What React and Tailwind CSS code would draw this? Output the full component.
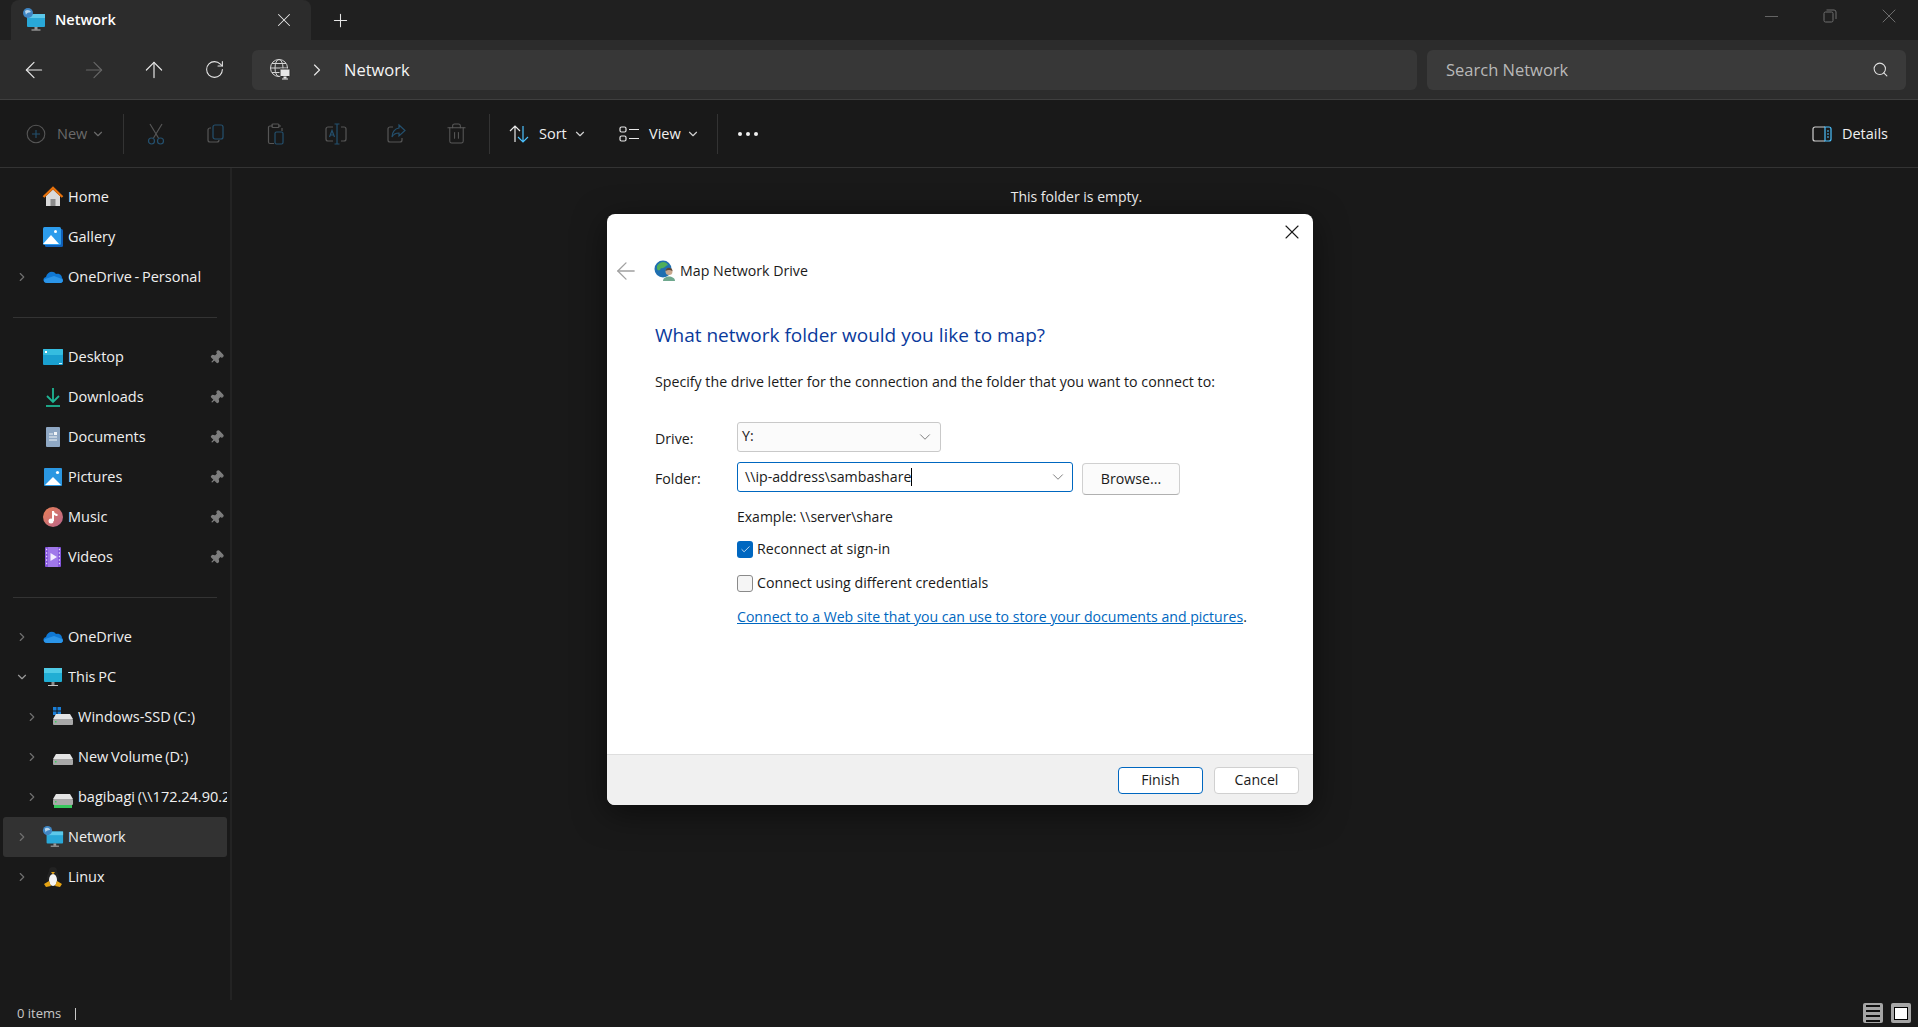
import { ChevronRight, ChevronDown, ArrowLeft, ArrowRight, ArrowUp, RotateCw, X, Plus, Search, Minus, Trash2, Pin, Check } from "lucide-react";

const uiFont = "font-['Open_Sans','Noto_Sans',sans-serif]";

const NetworkIcon = ({ size = 24 }) => (
  <svg width={size} height={size} viewBox="0 0 24 24">
    <rect x="5" y="6" width="18" height="13" rx="1" fill="#29a8d8" />
    <rect x="5" y="6" width="18" height="4" fill="#5cc8ea" />
    <rect x="12.5" y="19" width="3" height="2.5" fill="#9a9a9a" />
    <rect x="9.5" y="21.5" width="9" height="1" fill="#bdbdbd" />
    <circle cx="6" cy="5" r="5" fill="#3f86c4" />
    <path d="M3 3 C5 1 8 2 9 4 C7 5 5 4 4 7 Z" fill="#b9d6ec" />
  </svg>
);

const HomeIcon = () => (
  <svg width="22" height="22" viewBox="0 0 22 22">
    <path d="M4 10 L11 3.5 L18 10 V20 H4 Z" fill="#d9d9d9" />
    <rect x="8.5" y="13" width="5" height="7" fill="#8b8b8b" />
    <path d="M1.5 11 L11 2 L20.5 11" fill="none" stroke="#e8720c" strokeWidth="2.4" />
  </svg>
);

const GalleryIcon = () => (
  <svg width="22" height="22" viewBox="0 0 22 22">
    <rect x="3" y="3" width="18" height="18" rx="1.5" fill="#0f5fb8" />
    <rect x="1" y="1" width="18" height="18" rx="1.5" fill="#2c9cec" />
    <path d="M1 18 L9 9 L17 18 Z" fill="#ffffff" />
    <circle cx="13.5" cy="5.5" r="1.5" fill="#ffffff" />
  </svg>
);

const CloudIcon = () => (
  <svg width="22" height="16" viewBox="0 0 22 16">
    <path d="M5 14 C1 14 0 9 4 8 C5 3 11 1 14 5 C18 4 20 7 20 9 C22 11 21 14 18 14 Z" fill="#0f78d4" />
    <path d="M5 14 C2 14 1 11 3 10 L12 7 L20 10 C22 12 20 14 18 14 Z" fill="#2b95e8" />
  </svg>
);

const DesktopIcon = () => (
  <svg width="22" height="18" viewBox="0 0 22 18">
    <rect x="1" y="1" width="20" height="16" rx="1" fill="#1aa0d0" />
    <rect x="1" y="1" width="20" height="6" rx="1" fill="#35bde0" />
    <rect x="3" y="3" width="2" height="2" fill="#ffffff" />
    <rect x="17" y="15" width="3" height="1" fill="#d6f1fa" />
  </svg>
);

const DownloadIcon = () => (
  <svg width="22" height="22" viewBox="0 0 22 22" fill="none" stroke="#1fb594" strokeWidth="1.8">
    <path d="M11 2 V15 M5 10 L11 16 L17 10" />
    <path d="M4 20 H18" />
  </svg>
);

const DocIcon = () => (
  <svg width="22" height="22" viewBox="0 0 22 22">
    <rect x="4" y="1" width="14" height="20" rx="1" fill="#8fa8c4" />
    <path d="M7 8 H11 M7 11 H15 M7 14 H15" stroke="#f2f5f8" strokeWidth="1.2" />
    <rect x="12" y="6" width="3" height="3" fill="#f2f5f8" />
  </svg>
);

const PicturesIcon = () => (
  <svg width="20" height="20" viewBox="0 0 20 20">
    <rect x="1" y="1" width="18" height="18" rx="1" fill="#2a97e2" />
    <path d="M2 18 L10 10 L18 18 Z" fill="#ffffff" />
    <circle cx="14.5" cy="5.5" r="1.6" fill="#ffffff" />
  </svg>
);

const MusicIcon = () => (
  <svg width="22" height="22" viewBox="0 0 22 22">
    <defs>
      <linearGradient id="musicFill" x1="0" y1="0" x2="1" y2="1">
        <stop offset="0" stopColor="#e88055" />
        <stop offset="1" stopColor="#b8648c" />
      </linearGradient>
    </defs>
    <circle cx="11" cy="11" r="10" fill="url(#musicFill)" />
    <path d="M10 15 V5 H12 C12 7 14 8 15.5 8 V10 C14 10 13 9.5 12 9 V15 Z" fill="#fff" />
    <circle cx="9" cy="15" r="2.5" fill="#fff" />
  </svg>
);

const VideoIcon = () => (
  <svg width="20" height="22" viewBox="0 0 20 22">
    <rect x="2" y="1" width="16" height="20" rx="1" fill="#8455dc" />
    <rect x="5" y="1" width="10" height="20" fill="#a078ea" />
    <path d="M7.5 7 L14 11 L7.5 15 Z" fill="#f3ecff" />
    <path d="M3 3.5 H4.2 M3 7 H4.2 M3 10.5 H4.2 M3 14 H4.2 M3 17.5 H4.2 M15.8 3.5 H17 M15.8 7 H17 M15.8 10.5 H17 M15.8 14 H17 M15.8 17.5 H17" stroke="#e4d8fa" strokeWidth="1.3" />
  </svg>
);

const MonitorIcon = () => (
  <svg width="22" height="22" viewBox="0 0 22 22">
    <rect x="2" y="2" width="18" height="14" rx="1" fill="#21aed4" />
    <rect x="2" y="2" width="18" height="5" fill="#4fcbe6" />
    <rect x="9.5" y="16" width="3" height="3" fill="#8e8e8e" />
    <rect x="6" y="19" width="10" height="1" fill="#c4c4c4" />
  </svg>
);

const DriveIcon = ({ win, net }) => (
  <svg width="22" height="22" viewBox="0 0 22 22">
    {win && <path d="M1 1 H4.5 V4.5 H1 Z M5.5 1 H9 V4.5 H5.5 Z M1 5.5 H4.5 V9 H1 Z M5.5 5.5 H9 V9 H5.5 Z" fill="#1a7fd8" />}
    <path d="M4 8 H18 L21 13 H1 Z" fill="#e4e4e4" />
    <rect x="1" y="13" width="20" height="6" rx="1" fill="#a8a8a8" />
    <rect x="3" y="15" width="1.5" height="1.5" fill="#38d060" />
    {net && <rect x="2" y="19" width="18" height="3" fill="#36c75c" />}
  </svg>
);

const LinuxIcon = () => (
  <svg width="22" height="22" viewBox="0 0 22 22">
    <ellipse cx="11" cy="12" rx="6" ry="8" fill="#222" />
    <circle cx="11" cy="5" r="4" fill="#222" />
    <ellipse cx="11" cy="14" rx="4" ry="6" fill="#f4f4f4" />
    <path d="M9 6 L11 8.5 L13 6 Z" fill="#e6a413" />
    <path d="M2 18 L7 15 L9 20 L4 21 Z M20 18 L15 15 L13 20 L18 21 Z" fill="#e6a413" />
  </svg>
);

const GlobeIcon = () => (
  <svg width="24" height="24" viewBox="0 0 24 24" fill="none" stroke="#d4d4d4" strokeWidth="1">
    <circle cx="10" cy="10" r="8.5" />
    <ellipse cx="10" cy="10" rx="4" ry="8.5" />
    <path d="M1.5 10 H18.5 M3 5.5 H17 M3 14.5 H17" />
    <rect x="11" y="11" width="10" height="7.5" rx="0.5" fill="#e6e6e6" stroke="#2c2c2c" />
    <rect x="14.5" y="18.5" width="3" height="2" fill="#e6e6e6" stroke="none" />
    <rect x="13" y="20.5" width="6" height="1" fill="#e6e6e6" stroke="none" />
  </svg>
);

const MapDriveIcon = () => (
  <svg width="22" height="22" viewBox="0 0 22 22">
    <circle cx="9" cy="9" r="8.5" fill="#1f6fb0" />
    <path d="M3 6 C6 1 12 1 14 5 C11 6 10 9 7 8 C6 11 4 11 3 9 Z" fill="#4fae5a" />
    <path d="M9 21 C9 15 21 15 21 21 Z" fill="#6fa88e" />
    <circle cx="15" cy="11.5" r="3.5" fill="#c9a88e" />
    <path d="M11.5 11 C11.5 6.5 18.5 6.5 18.5 11 C16 9.5 14 9.5 11.5 11 Z" fill="#5a4636" />
  </svg>
);

const NewIcon = () => (
  <svg width="20" height="20" viewBox="0 0 20 20" fill="none" strokeWidth="1.1">
    <circle cx="10" cy="10" r="8.8" stroke="#565656" />
    <path d="M10 6 V14 M6 10 H14" stroke="#24506e" />
  </svg>
);

const ScissorsIcon = () => (
  <svg width="20" height="22" viewBox="0 0 20 22" fill="none" strokeWidth="1.2">
    <path d="M4 1 L12.5 15 M16 1 L7.5 15" stroke="#565656" />
    <circle cx="5.5" cy="18" r="3" stroke="#24506e" />
    <circle cx="14.5" cy="18" r="3" stroke="#24506e" />
  </svg>
);

const CopyIcon = () => (
  <svg width="22" height="22" viewBox="0 0 22 22" fill="none" strokeWidth="1.2">
    <path d="M6 5 H5 a2 2 0 0 0 -2 2 V17 a2 2 0 0 0 2 2 H12 a2 2 0 0 0 2 -2" stroke="#565656" />
    <rect x="8" y="2" width="10" height="14" rx="2" stroke="#24506e" />
  </svg>
);

const PasteIcon = () => (
  <svg width="22" height="22" viewBox="0 0 22 22" fill="none" strokeWidth="1.2">
    <path d="M8 3 H5 a1.5 1.5 0 0 0 -1.5 1.5 V19 a1.5 1.5 0 0 0 1.5 1.5 H9 M16 3 H13 M17 5 V8" stroke="#565656" />
    <rect x="7" y="1" width="7" height="3.5" rx="1" stroke="#565656" />
    <rect x="10" y="9" width="8" height="12" rx="1.5" stroke="#24506e" />
  </svg>
);

const RenameIcon = () => (
  <svg width="24" height="22" viewBox="0 0 24 22" fill="none" strokeWidth="1.2">
    <path d="M9 4 H4 a2 2 0 0 0 -2 2 V16 a2 2 0 0 0 2 2 H9 M17 4 H20 a2 2 0 0 1 2 2 V16 a2 2 0 0 1 -2 2 H17" stroke="#565656" />
    <path d="M13 1 V21 M10.5 1 H15.5 M10.5 21 H15.5" stroke="#24506e" />
    <path d="M5.5 14 L8 7.5 L10.5 14 M6.5 12 H9.5" stroke="#24506e" />
  </svg>
);

const ShareIcon = () => (
  <svg width="22" height="22" viewBox="0 0 22 22" fill="none" strokeWidth="1.2">
    <path d="M8 4 H5 a2 2 0 0 0 -2 2 V17 a2 2 0 0 0 2 2 H15 a2 2 0 0 0 2 -2 V15" stroke="#565656" />
    <path d="M14 2 L20 7.5 L14 13 V10 C10 10 8 12 7 14 C7 9 10 5.5 14 5 Z" stroke="#24506e" />
  </svg>
);

const SortIcon = () => (
  <svg width="20" height="20" viewBox="0 0 20 20" fill="none" strokeWidth="1.2">
    <path d="M6 18 V2 M1 7 L6 2 L11 7" stroke="#e8e8e8" />
    <path d="M14 2 V18 M9 13 L14 18 L19 13" stroke="#4cc2ff" />
  </svg>
);

const ViewIcon = () => (
  <svg width="21" height="20" viewBox="0 0 21 20" fill="none" strokeWidth="1.2">
    <rect x="1" y="3" width="6" height="5" rx="1.5" stroke="#e8e8e8" />
    <rect x="1" y="12" width="6" height="5" rx="1.5" stroke="#e8e8e8" />
    <path d="M10 5.5 H20 M10 14.5 H20" stroke="#e8e8e8" />
  </svg>
);

const DetailsIcon = () => (
  <svg width="20" height="16" viewBox="0 0 20 16" fill="none" strokeWidth="1.2">
    <path d="M13 1 H3 a2 2 0 0 0 -2 2 V13 a2 2 0 0 0 2 2 H13" stroke="#d0d0d0" />
    <path d="M13 1 H17 a2 2 0 0 1 2 2 V13 a2 2 0 0 1 -2 2 H13 Z" stroke="#4cc2ff" />
    <path d="M15 5 H17 M15 8 H17 M15 11 H17" stroke="#4cc2ff" />
  </svg>
);

const RestoreIcon = () => (
  <svg width="14" height="14" viewBox="0 0 14 14" fill="none" stroke="#6e6e6e" strokeWidth="1">
    <rect x="1" y="3" width="9" height="10" rx="1.5" />
    <path d="M3.5 1 H11 a2 2 0 0 1 2 2 V10" />
  </svg>
);

const SideRow = ({ label, icon, chevron, open, indent, pinned, active }) => (
  <div className={`flex h-10 items-center relative mx-[3px] ${active ? "bg-[#323232] rounded-[3px]" : ""}`}>
    <div className={`flex items-center justify-center w-[14px] shrink-0 ${indent ? "ml-[22px]" : "ml-[12px]"}`}>
      {chevron && (open ? <ChevronDown size={18} className="text-[#9a9a9a]" /> : <ChevronRight size={18} className="text-[#6f6f6f]" />)}
    </div>
    <div className="flex items-center justify-center w-[24px] ml-[12px] shrink-0">{icon}</div>
    <span className="ml-[3px] text-[14.5px] leading-5 [word-spacing:-1px] text-[#f0f0f0] whitespace-nowrap overflow-hidden flex-1">{label}</span>
    {pinned && <Pin size={15} className="absolute right-[3px] text-[#7d7d7d] rotate-45" fill="#7d7d7d" />}
  </div>
);

const NavBtn = ({ children }) => <div className="w-[60px] h-full flex items-center justify-center">{children}</div>;

const CmdIcon = ({ children }) => <div className="w-[60px] flex items-center justify-center">{children}</div>;

const Sep = () => <div className="w-px h-10 bg-[#333333]" />;

export default function App() {
  return (
    <div className={`relative w-[1918px] h-[1027px] overflow-hidden bg-[#191919] flex flex-col ${uiFont}`}>
      {/* tab strip */}
      <div className="h-10 bg-[#202020] flex items-end pl-[11px] shrink-0">
        <div className="w-[300px] h-10 bg-[#2c2c2c] rounded-t-lg flex items-center pl-[11px] pr-[16px]">
          <NetworkIcon />
          <span className="ml-[9px] text-[14.5px] text-white font-semibold flex-1">Network</span>
          <X size={22} strokeWidth={1.1} className="text-[#e6e6e6]" />
        </div>
        <div className="h-10 w-[56px] flex items-center justify-center ml-px">
          <Plus size={21} strokeWidth={1.2} className="text-[#e6e6e6]" />
        </div>
        <div className="ml-auto h-8 self-start flex items-center">
          <div className="w-[58px] flex justify-center"><Minus size={21} strokeWidth={1} className="text-[#6e6e6e]" /></div>
          <div className="w-[59px] flex justify-center"><RestoreIcon /></div>
          <div className="w-[59px] flex justify-center"><X size={24} strokeWidth={1} className="text-[#6e6e6e]" /></div>
        </div>
      </div>

      {/* address bar */}
      <div className="h-[60px] bg-[#2c2c2c] border-b border-[#3f3f3f] flex items-center shrink-0 pl-[4px] pr-[12px]">
        <div className="flex h-10 w-[248px] shrink-0">
          <NavBtn><ArrowLeft size={26} strokeWidth={1.1} className="text-[#e6e6e6]" /></NavBtn>
          <NavBtn><ArrowRight size={26} strokeWidth={1.1} className="text-[#666666]" /></NavBtn>
          <NavBtn><ArrowUp size={26} strokeWidth={1.1} className="text-[#e6e6e6]" /></NavBtn>
          <NavBtn><RotateCw size={21} strokeWidth={1.2} className="text-[#e6e6e6]" /></NavBtn>
        </div>
        <div className="h-10 w-[1165px] bg-[#373737] rounded-md flex items-center pl-[17px]">
          <GlobeIcon />
          <ChevronRight size={20} strokeWidth={1.4} className="ml-[14px] text-[#e6e6e6]" />
          <span className="ml-[17px] mt-px text-[16.5px] text-[#f4f4f4]">Network</span>
        </div>
        <div className="h-10 flex-1 ml-[10px] bg-[#3a3a3a] rounded-md flex items-center pl-[19px] pr-[17px]">
          <span className="flex-1 mt-px text-[16.5px] text-[#b8b8b8]">Search Network</span>
          <Search size={17} strokeWidth={1.5} className="text-[#e0e0e0]" />
        </div>
      </div>

      {/* command bar */}
      <div className="h-[68px] border-b border-[#333333] flex items-center shrink-0 pl-[26px] pr-[30px] text-[14.5px]">
        <div className="flex items-center w-[97px]">
          <NewIcon />
          <span className="ml-[11px] mt-px text-[#6a6a6a]">New</span>
          <ChevronDown size={14} className="ml-[4px] text-[#6a6a6a]" />
        </div>
        <Sep />
        <div className="flex ml-[2px]">
          <CmdIcon><ScissorsIcon /></CmdIcon>
          <CmdIcon><CopyIcon /></CmdIcon>
          <CmdIcon><PasteIcon /></CmdIcon>
          <CmdIcon><RenameIcon /></CmdIcon>
          <CmdIcon><ShareIcon /></CmdIcon>
          <CmdIcon><Trash2 size={23} strokeWidth={1.05} className="text-[#5a5a5a]" /></CmdIcon>
        </div>
        <div className="ml-[3px]"><Sep /></div>
        <div className="flex items-center ml-[19px] w-[110px]">
          <SortIcon />
          <span className="ml-[10px] mt-px text-[#f0f0f0]">Sort</span>
          <ChevronDown size={14} className="ml-[6px] text-[#d0d0d0]" />
        </div>
        <div className="flex items-center w-[98px]">
          <ViewIcon />
          <span className="ml-[9px] mt-px text-[#f0f0f0]">View</span>
          <ChevronDown size={14} className="ml-[5px] text-[#d0d0d0]" />
        </div>
        <Sep />
        <div className="ml-[20px] flex gap-[4px]">
          <div className="w-1 h-1 rounded-full bg-[#f0f0f0]" />
          <div className="w-1 h-1 rounded-full bg-[#f0f0f0]" />
          <div className="w-1 h-1 rounded-full bg-[#f0f0f0]" />
        </div>
        <div className="ml-auto flex items-center">
          <DetailsIcon />
          <span className="ml-[10px] mt-px text-[#f0f0f0]">Details</span>
        </div>
      </div>

      {/* body */}
      <div className="flex flex-1 min-h-0">
        <div className="w-[232px] shrink-0 border-r-2 border-[#232323] pt-[9px]">
          <SideRow label="Home" icon={<HomeIcon />} />
          <SideRow label="Gallery" icon={<GalleryIcon />} />
          <SideRow label="OneDrive - Personal" icon={<CloudIcon />} chevron />
          <div className="h-px bg-[#333333] mx-[13px] mt-[20px] mb-[19px]" />
          <SideRow label="Desktop" icon={<DesktopIcon />} pinned />
          <SideRow label="Downloads" icon={<DownloadIcon />} pinned />
          <SideRow label="Documents" icon={<DocIcon />} pinned />
          <SideRow label="Pictures" icon={<PicturesIcon />} pinned />
          <SideRow label="Music" icon={<MusicIcon />} pinned />
          <SideRow label="Videos" icon={<VideoIcon />} pinned />
          <div className="h-px bg-[#333333] mx-[13px] mt-[20px] mb-[19px]" />
          <SideRow label="OneDrive" icon={<CloudIcon />} chevron />
          <SideRow label="This PC" icon={<MonitorIcon />} chevron open />
          <SideRow label="Windows-SSD (C:)" icon={<DriveIcon win />} chevron indent />
          <SideRow label="New Volume (D:)" icon={<DriveIcon />} chevron indent />
          <SideRow label="bagibagi (\\172.24.90.2" icon={<DriveIcon net />} chevron indent />
          <SideRow label="Network" icon={<NetworkIcon size={22} />} chevron active />
          <SideRow label="Linux" icon={<LinuxIcon />} chevron />
        </div>
        <div className="flex-1 flex justify-center pt-[19px]">
          <span className="text-[14px] leading-5 text-[#f0f0f0] ml-[3px]">This folder is empty.</span>
        </div>
      </div>

      {/* status bar */}
      <div className="h-[27px] shrink-0 flex items-center pl-[17px] pr-[7px] bg-[#1a1a1a]">
        <span className="text-[13px] text-[#c8c8c8]">0 items</span>
        <div className="w-px h-[12px] bg-[#c8c8c8] ml-[14px]" />
        <div className="ml-auto flex items-center gap-[8px] mb-[1px]">
          <div className="w-5 h-5 bg-[#a6a6a6] rounded-[2px] flex flex-col justify-center gap-[3px] px-[3px]">
            <div className="h-[2px] bg-[#111]" />
            <div className="h-[2px] bg-[#111]" />
            <div className="h-[2px] bg-[#111]" />
            <div className="h-[2px] bg-[#111]" />
          </div>
          <div className="w-5 h-5 bg-[#a6a6a6] rounded-[2px] flex items-center justify-center">
            <div className="w-[14px] h-[13px] bg-white border border-black" />
          </div>
        </div>
      </div>

      {/* map network drive dialog */}
      <div className="absolute left-[607px] top-[214px] w-[706px] h-[591px] bg-white rounded-lg flex flex-col text-[14.2px] text-[#1a1a1a] shadow-[0_8px_32px_rgba(0,0,0,0.5)]">
        <X size={24} strokeWidth={1.1} className="absolute right-[9px] top-[6px] text-[#1a1a1a]" />
        <div className="flex-1 flex flex-col pl-[48px]">
          <div className="flex items-center h-6 mt-[45px] ml-[-43px]">
            <ArrowLeft size={28} strokeWidth={1.1} className="text-[#a0a0a0]" />
            <div className="ml-[14px]"><MapDriveIcon /></div>
            <span className="ml-[4px]">Map Network Drive</span>
          </div>
          <div className="mt-[38px] text-[19px] leading-7 text-[#0a3a9c]">What network folder would you like to map?</div>
          <div className="mt-[23px] leading-5">Specify the drive letter for the connection and the folder that you want to connect to:</div>
          <div className="flex items-center h-[30px] mt-[30px]">
            <span className="w-[82px] pt-[4px]">Drive:</span>
            <div className="w-[204px] h-[30px] bg-[#fbfbfb] border border-[#c9c9c9] rounded-[3px] flex items-center pl-[4px] pr-[6px] pb-[2px]">
              <span className="flex-1">Y:</span>
              <ChevronDown size={18} strokeWidth={1} className="text-[#555] mt-[2px]" />
            </div>
          </div>
          <div className="flex items-start mt-[10px]">
            <span className="w-[82px] pt-[6px]">Folder:</span>
            <div className="w-[336px] h-[30px] bg-white border border-[#0067c0] rounded-[3px] flex items-center pl-[7px] pr-[5px]">
              <span className="text-[#1a1a1a]">\\ip-address\sambashare</span>
              <div className="w-px h-[18px] bg-black" />
              <ChevronDown size={18} strokeWidth={1} className="ml-auto text-[#555]" />
            </div>
            <div className="ml-[9px] w-[98px] h-[32px] mt-[1px] bg-[#fbfbfb] border border-[#d0d0d0] border-b-[#b0b0b0] rounded-[4px] flex items-center justify-center">Browse...</div>
          </div>
          <div className="ml-[82px] mt-[12px] leading-5 text-[14px]">Example: \\server\share</div>
          <div className="ml-[82px] mt-[12px] flex items-center h-5">
            <div className="w-4 h-[17px] rounded-[3px] bg-[#0067c0] flex items-center justify-center">
              <Check size={11} strokeWidth={1.6} className="text-white" />
            </div>
            <span className="ml-[4px]">Reconnect at sign-in</span>
          </div>
          <div className="ml-[82px] mt-[14px] flex items-center h-5">
            <div className="w-4 h-[17px] rounded-[3px] bg-[#f5f5f5] border border-[#8a8a8a]" />
            <span className="ml-[4px]">Connect using different credentials</span>
          </div>
          <div className="ml-[82px] mt-[14px] leading-5 text-[14.1px]">
            <span className="text-[#0067c0] underline">Connect to a Web site that you can use to store your documents and pictures</span>.
          </div>
        </div>
        <div className="h-[51px] bg-[#f0f0f0] border-t border-[#dedede] rounded-b-lg flex items-center justify-end gap-[11px] pr-[14px]">
          <div className="w-[85px] h-[27px] bg-white border border-[#0067c0] rounded-[4px] flex items-center justify-center">Finish</div>
          <div className="w-[85px] h-[27px] bg-white border border-[#d0d0d0] rounded-[4px] flex items-center justify-center">Cancel</div>
        </div>
      </div>
    </div>
  );
}
